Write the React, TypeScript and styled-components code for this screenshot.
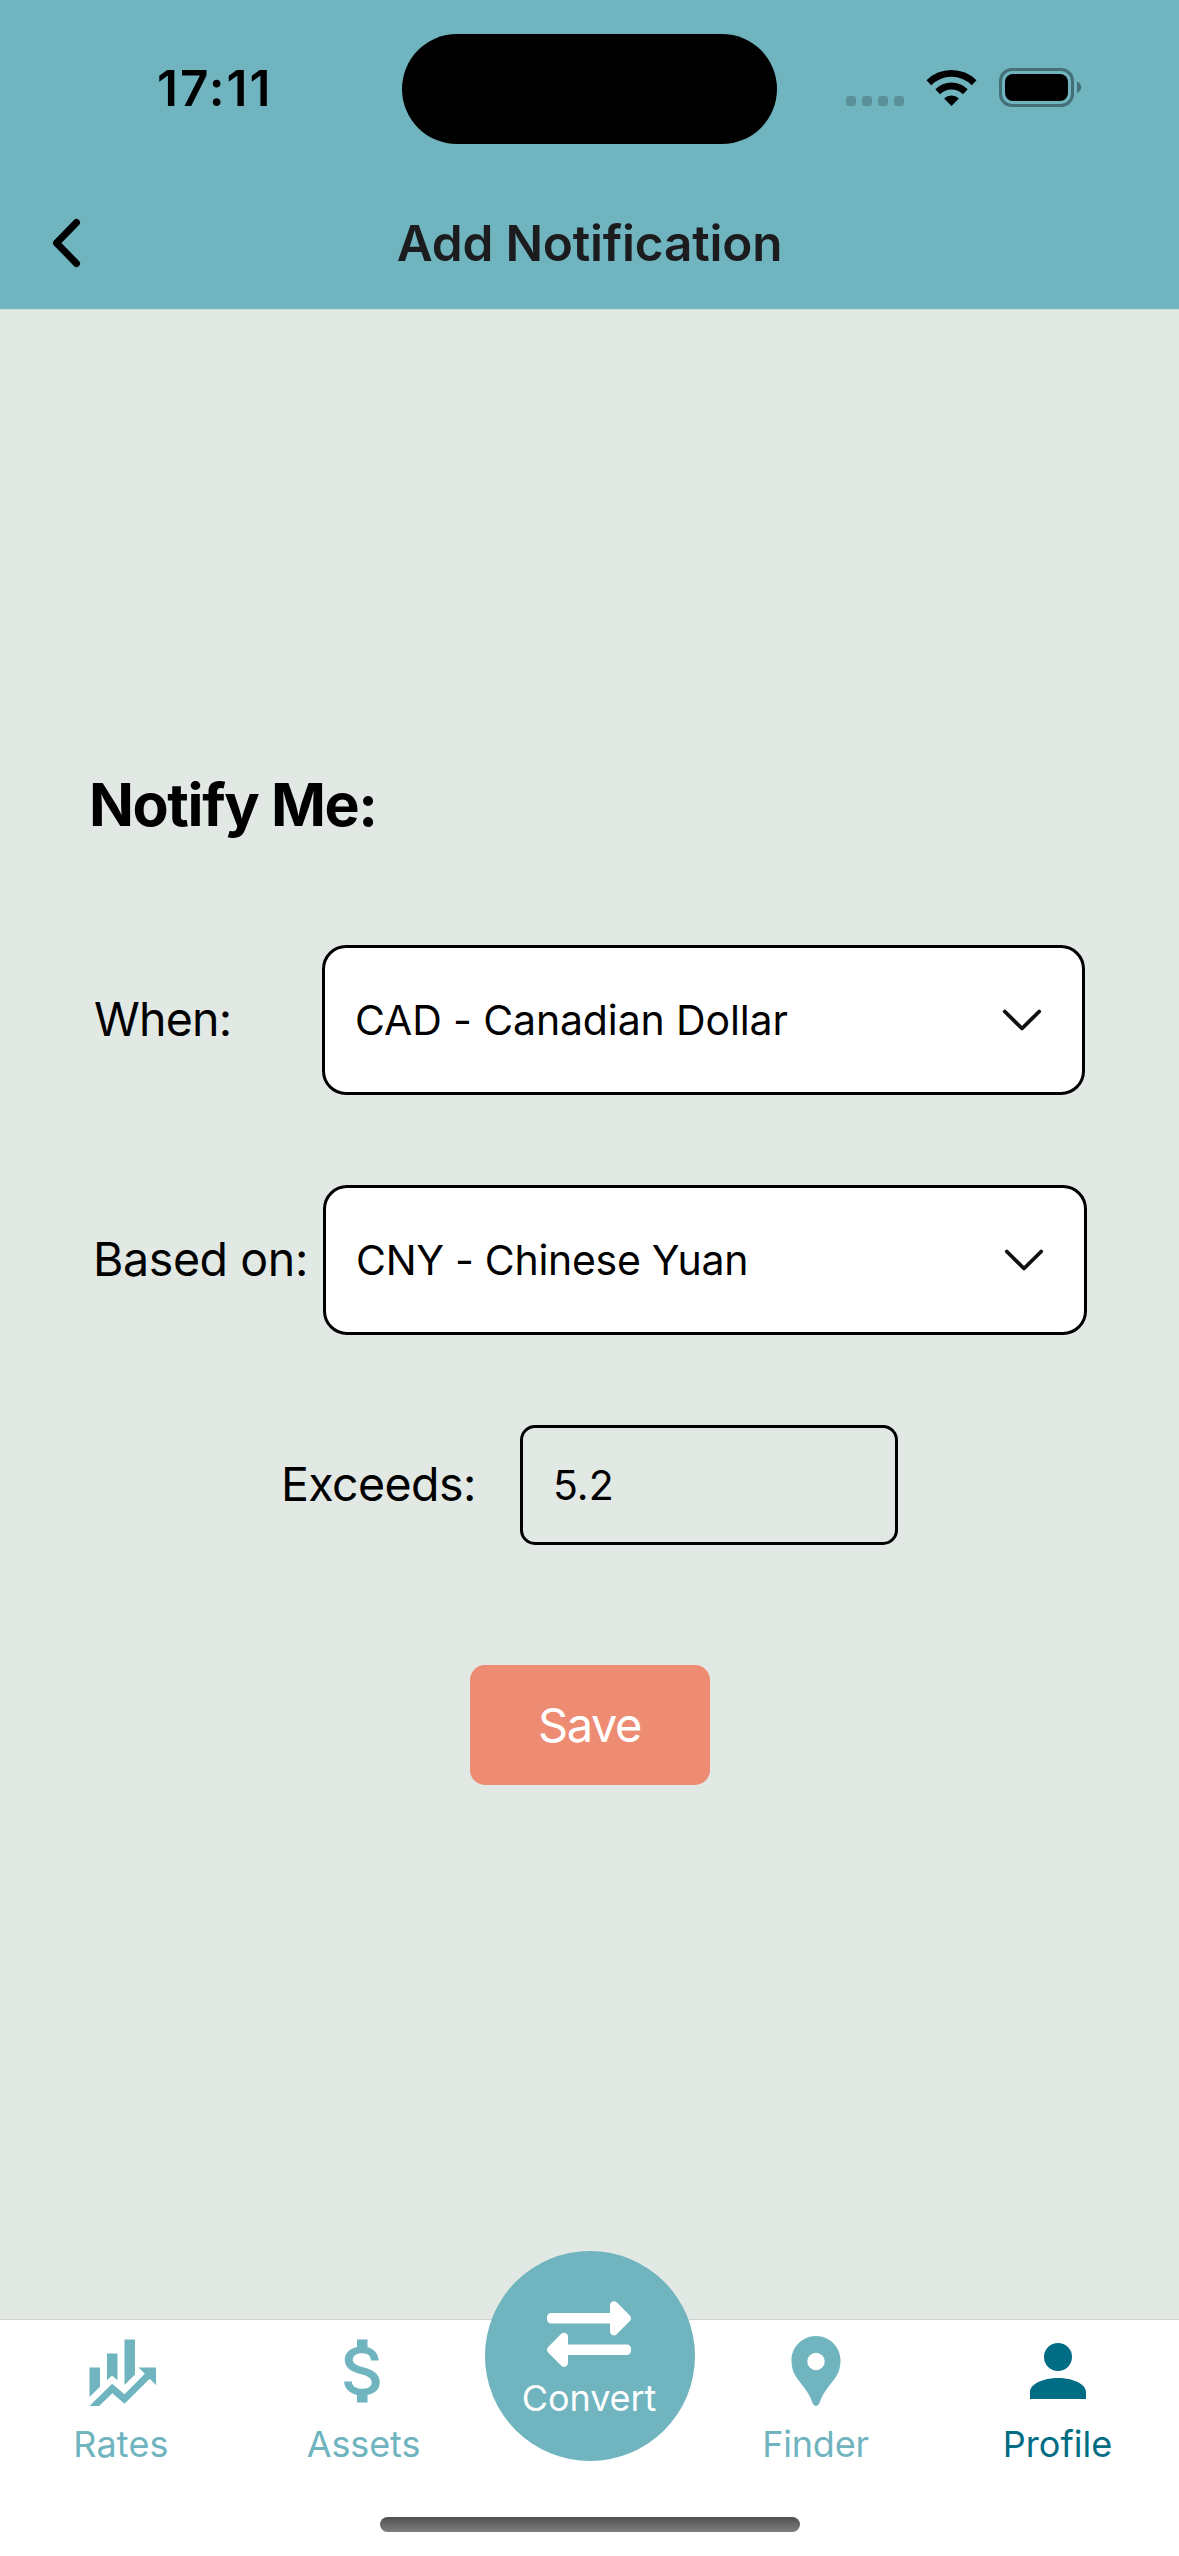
import React from 'react';
import styled, { createGlobalStyle } from 'styled-components';

const TEAL = '#6fb4bf';
const DEEP = '#006d85';

const GlobalStyle = createGlobalStyle`
  * { box-sizing: border-box; }
  html, body { margin: 0; padding: 0; }
  body { font-family: Inter, Roboto, sans-serif; color: #000; background: #e2e8e4; }
`;

const Screen = styled.div`
  width: 1179px;
  height: 2556px;
  display: flex;
  flex-direction: column;
  background: #e2e8e4;
  overflow: hidden;
`;

const Header = styled.header`
  height: 310px;
  flex: none;
  background: ${TEAL};
  border-bottom: 1px solid #d5dcd7;
`;

const StatusBar = styled.div`
  height: 177px;
  display: grid;
  grid-template-columns: 402px 375px 1fr;
`;

const Clock = styled.div`
  padding: 58px 0 0 157px;
  font-size: 49.5px;
  line-height: 60px;
  font-weight: 600;
  letter-spacing: 2px;
`;

const Island = styled.div`
  height: 110.5px;
  margin-top: 33.5px;
  border-radius: 56px;
  background: #000;
`;

const StatusIcons = styled.div`
  display: flex;
  align-items: flex-start;
  padding: 68px 0 0 69px;
`;

const Signal = styled.div`
  display: flex;
  gap: 6px;
  margin: 28px 22px 0 0;
`;

const Dot = styled.i`
  width: 10px;
  height: 10px;
  border-radius: 3px;
  background: #5a9199;
`;

const TitleBar = styled.div`
  height: 132px;
  display: grid;
  grid-template-columns: 120px 1fr 120px;
  align-items: center;
`;

const BackButton = styled.button`
  border: 0;
  padding: 0 0 0 50px;
  background: none;
  height: 50px;
  display: flex;
`;

const Title = styled.h1`
  margin: 0;
  font-size: 49.5px;
  line-height: 60px;
  font-weight: 600;
  letter-spacing: -0.2px;
  text-align: center;
  white-space: nowrap;
  color: #1c1c1e;
`;

const Form = styled.main`
  flex: 1;
  display: flex;
  flex-direction: column;
  padding-top: 459px;
`;

const Heading = styled.h2`
  margin: 0 0 104px;
  padding-left: 89px;
  font-size: 59px;
  line-height: 72px;
  font-weight: 700;
  letter-spacing: -1.4px;
`;

const Field = styled.div<{ $indent: number; $height: number }>`
  display: flex;
  align-items: center;
  height: ${(p) => p.$height}px;
  padding-left: ${(p) => p.$indent}px;
  margin-bottom: 90px;
`;

const Label = styled.label<{ $width: number; $spacing: number }>`
  flex: none;
  width: ${(p) => p.$width}px;
  padding-bottom: 2px;
  font-size: 46.5px;
  line-height: 56px;
  letter-spacing: ${(p) => p.$spacing}px;
  white-space: nowrap;
`;

const Select = styled.div<{ $width: number }>`
  width: ${(p) => p.$width}px;
  height: 150px;
  display: flex;
  align-items: center;
  justify-content: space-between;
  padding: 0 39px 0 30px;
  border: 3px solid #000;
  border-radius: 24px;
  background: #fff;
`;

const Value = styled.span<{ $spacing?: number }>`
  padding-bottom: 1px;
  font-size: 41px;
  line-height: 50px;
  letter-spacing: ${(p) => p.$spacing ?? 0}px;
  white-space: nowrap;
`;

const Input = styled.div`
  width: 378px;
  height: 120px;
  display: flex;
  align-items: center;
  padding-left: 30px;
  border: 3px solid #000;
  border-radius: 15px;
`;

const SaveButton = styled.button`
  align-self: center;
  width: 240px;
  height: 120px;
  margin-top: 30px;
  border: 0;
  border-radius: 15px;
  padding: 0;
  background: #ee8c73;
  color: #fff;
  font: 400 47px/56px Inter, Roboto, sans-serif;
  letter-spacing: -1.4px;
`;

const TabBar = styled.nav`
  flex: none;
  height: 237px;
  display: grid;
  grid-template-rows: 197px 15px;
  background: #fff;
  border-top: 1px solid #d0d5d1;
`;

const Tabs = styled.div`
  display: grid;
  grid-template-columns: 242px 243px 210px 241px 243px;
`;

const Tab = styled.a<{ $active?: boolean }>`
  display: flex;
  flex-direction: column;
  align-items: center;
  padding-top: 9px;
  color: ${(p) => (p.$active ? DEEP : TEAL)};
`;

const TabLabel = styled.span<{ $spacing: number }>`
  margin-top: 9px;
  font-size: 36px;
  line-height: 44px;
  letter-spacing: ${(p) => p.$spacing}px;
`;

const ConvertButton = styled.a`
  width: 210px;
  height: 210px;
  margin-top: -69px;
  display: flex;
  flex-direction: column;
  align-items: center;
  padding: 41px 2px 0 0;
  border-radius: 50%;
  background: ${TEAL};
  color: #fff;
`;

const ConvertLabel = styled.span`
  font-size: 36px;
  line-height: 44px;
  letter-spacing: -0.1px;
`;

const HomeIndicator = styled.div`
  justify-self: center;
  width: 420px;
  height: 15px;
  border-radius: 8px;
  background: linear-gradient(#505050, #7e7e7e);
`;

const Glyph = ({ d }: { d: string }) => (
  <svg width="84" height="84" viewBox="0 0 24 24" fill="currentColor" fillRule="evenodd">
    <path d={d} />
  </svg>
);

const Chevron = () => (
  <svg width="42" height="26" viewBox="0 0 42 26" fill="none" stroke="#111" strokeWidth="3.8" strokeLinecap="round" strokeLinejoin="round">
    <path d="M3.8 4.5 21 21.500 38.200 4.500" />
  </svg>
);

const paths = {
  rates:
    'M6 16.5 3 19.44V11h3M11 14.66l-1.570-1.340L8 14.640V7h3M16 13l-3 3V3h3M18.810 12.810 17 11h5v5l-1.790-1.790L13 21.360l-3.470-3.020L5.750 22H3l6.470-6.340L13 18.640',
  assets:
    'M11.8 10.9c-2.27-.59-3-1.2-3-2.15 0-1.09 1.01-1.85 2.7-1.85 1.78 0 2.44.85 2.5 2.1h2.21c-.07-1.72-1.12-3.3-3.21-3.81V3h-3v2.16c-1.94.42-3.5 1.68-3.5 3.61 0 2.31 1.91 3.46 4.7 4.13 2.5.6 3 1.48 3 2.41 0 .69-.49 1.79-2.7 1.79-2.06 0-2.87-.92-2.98-2.1h-2.2c.12 2.19 1.76 3.42 3.68 3.83V21h3v-2.15c1.95-.37 3.5-1.5 3.5-3.55 0-2.84-2.43-3.81-4.7-4.4z',
  finder:
    'M12 2C8.130 2 5 5.130 5 9c0 1.700.400 3.200 1.200 4.500.900 1.400 2 2.600 3 4.100.700 1 1.200 1.900 1.600 3 .250.700.500 1.400 1.200 1.400s.950-.700 1.200-1.400c.400-1.100.900-2 1.600-3 1-1.500 2.100-2.700 3-4.100C18.600 12.200 19 10.700 19 9c0-3.870-3.130-7-7-7zm0 4.750a2.500 2.500 0 1 1 0 5 2.500 2.500 0 0 1 0-5z',
  profile:
    'M12 4a4 4 0 1 1 0 8 4 4 0 0 1 0-8zM12 14c4.420 0 8 1.790 8 4v2H4v-2c0-2.210 3.580-4 8-4z',
};

export default function App() {
  return (
    <>
      <GlobalStyle />
      <Screen>
        <Header>
          <StatusBar>
            <Clock>17:11</Clock>
            <Island />
            <StatusIcons>
              <Signal>
                <Dot />
                <Dot />
                <Dot />
                <Dot />
              </Signal>
              <svg width="156" height="40" viewBox="0 0 156 40">
                <path d="M.5 12.200a35.500 35.500 0 0 1 50 0L45.800 17.200a28.700 28.700 0 0 0-40.600 0zM9.300 21.200a23 23 0 0 1 32.400 0L37 26.200a16.300 16.300 0 0 0-23 0zM18.100 30.400a10.600 10.600 0 0 1 14.800 0L25.500 38z" />
                <rect x="74.500" y="1.500" width="72" height="36" rx="11.500" fill="none" stroke="#456f76" strokeWidth="3" />
                <rect x="79" y="6" width="63" height="27" rx="8" />
                <path d="M151 13.500c5.500 2.200 5.500 9.300 0 11.500z" fill="#456f76" />
              </svg>
            </StatusIcons>
          </StatusBar>
          <TitleBar>
            <BackButton aria-label="Back">
              <svg width="32" height="50" viewBox="0 0 32 50" fill="none" stroke="#000" strokeWidth="7" strokeLinecap="round" strokeLinejoin="round">
                <path d="M26.500 4.500 6.500 25 26.500 45.500" />
              </svg>
            </BackButton>
            <Title>Add Notification</Title>
          </TitleBar>
        </Header>
        <Form>
          <Heading>Notify Me:</Heading>
          <Field $indent={94} $height={150}>
            <Label $width={228} $spacing={-0.8}>When:</Label>
            <Select $width={763}>
              <Value $spacing={-0.13}>CAD - Canadian Dollar</Value>
              <Chevron />
            </Select>
          </Field>
          <Field $indent={93} $height={150}>
            <Label $width={230} $spacing={-0.4}>Based on:</Label>
            <Select $width={764}>
              <Value $spacing={-0.3}>CNY - Chinese Yuan</Value>
              <Chevron />
            </Select>
          </Field>
          <Field $indent={281} $height={120}>
            <Label $width={239} $spacing={-0.6}>Exceeds:</Label>
            <Input>
              <Value>5.2</Value>
            </Input>
          </Field>
          <SaveButton>Save</SaveButton>
        </Form>
        <TabBar>
          <Tabs>
            <Tab>
              <Glyph d={paths.rates} />
              <TabLabel $spacing={0.2}>Rates</TabLabel>
            </Tab>
            <Tab>
              <Glyph d={paths.assets} />
              <TabLabel $spacing={-0.1}>Assets</TabLabel>
            </Tab>
            <ConvertButton>
              <svg width="84" height="84" viewBox="0 0 512 512" fill="currentColor">
                <path d="M0 168v-16c0-13.255 10.745-24 24-24h360V80c0-21.367 25.899-32.042 40.971-16.971l80 80c9.372 9.373 9.372 24.569 0 33.941l-80 80C409.956 271.982 384 261.456 384 240v-48H24c-13.255 0-24-10.745-24-24zm488 152H128v-48c0-21.314-25.862-32.080-40.971-16.971l-80 80c-9.372 9.373-9.372 24.569 0 33.941l80 80C102.057 463.997 128 453.437 128 432v-48h360c13.255 0 24-10.745 24-24v-16c0-13.255-10.745-24-24-24z" />
              </svg>
              <ConvertLabel>Convert</ConvertLabel>
            </ConvertButton>
            <Tab>
              <Glyph d={paths.finder} />
              <TabLabel $spacing={-0.2}>Finder</TabLabel>
            </Tab>
            <Tab $active>
              <Glyph d={paths.profile} />
              <TabLabel $spacing={0}>Profile</TabLabel>
            </Tab>
          </Tabs>
          <HomeIndicator />
        </TabBar>
      </Screen>
    </>
  );
}
